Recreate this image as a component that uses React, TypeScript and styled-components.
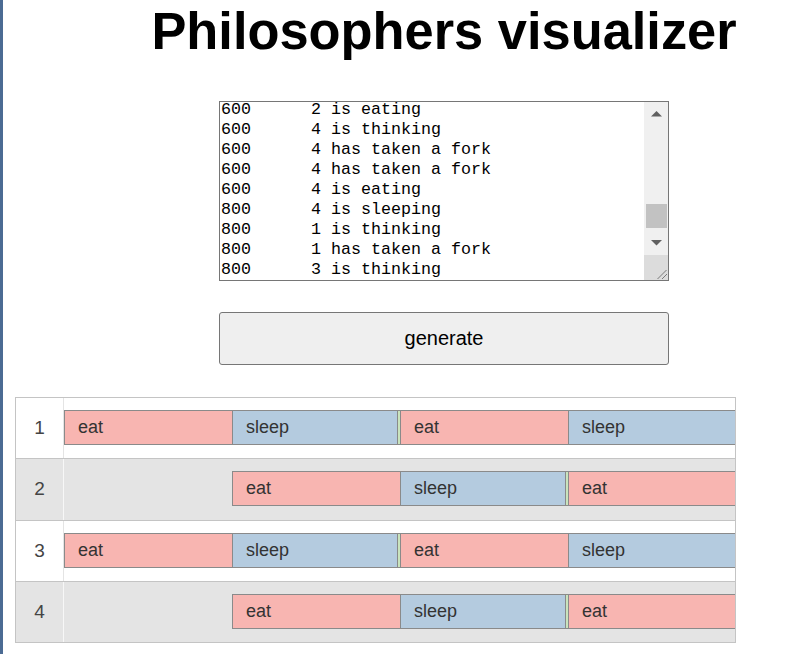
import React, { useLayoutEffect, useRef } from "react";
import styled, { createGlobalStyle } from "styled-components";

const GlobalStyle = createGlobalStyle`
  html, body {
    margin: 0;
    padding: 0;
    background: #ffffff;
  }
  body {
    overflow: hidden;
    font-family: "Liberation Sans", Arial, sans-serif;
  }
`;

const Page = styled.div`
  display: flex;
  min-height: 654px;
`;

const SideBar = styled.div`
  width: 3px;
  flex: none;
  background: #4b6b93;
`;

const Main = styled.main`
  flex: 1;
  min-width: 0;
  display: flex;
  flex-direction: column;
`;

const Header = styled.header`
  display: flex;
  flex-direction: column;
  align-items: center;
  padding-left: 92px;
`;

const Title = styled.h1`
  margin: 1px 0 0;
  height: 60px;
  font-family: "Liberation Sans", Arial, sans-serif;
  font-weight: 700;
  font-size: 52.4px;
  line-height: 60px;
  color: #000;
  white-space: nowrap;
`;

const LogFrame = styled.div`
  margin-top: 40px;
  width: 450px;
  height: 180px;
  box-sizing: border-box;
  border: 1px solid #767676;
  background: #fff;
  display: grid;
  grid-template-columns: 1fr 24px;
`;

const Log = styled.textarea`
  display: block;
  box-sizing: border-box;
  width: 100%;
  height: 100%;
  margin: 0;
  padding: 0 1px;
  border: none;
  font-family: "Liberation Mono", "DejaVu Sans Mono", monospace;
  font-size: 16.67px;
  line-height: 20px;
  color: #000;
  background: #fff;
  white-space: pre;
  overflow: hidden;
  scrollbar-width: none;
  resize: none;
  outline: none;
`;

const Rail = styled.div`
  display: flex;
  flex-direction: column;
  background: #f0f0f0;
`;

const RailButton = styled.div`
  flex: none;
  height: 24px;
  display: flex;
  align-items: center;
  justify-content: center;
  color: #606060;
`;

const RailTrack = styled.div`
  flex: 1;
  display: flex;
  flex-direction: column;
`;

const Thumb = styled.div`
  flex: none;
  height: 24px;
  margin: 0 1px 0 2px;
  background: #c2c2c2;
`;

const Corner = styled.div`
  flex: none;
  height: 25px;
  background: #dcdcdc;
  display: flex;
  align-items: flex-end;
  justify-content: flex-end;
`;

const GenerateButton = styled.button`
  display: block;
  box-sizing: border-box;
  margin-top: 31px;
  width: 450px;
  height: 53px;
  border: 1px solid #767676;
  border-radius: 3px;
  background: #efefef;
  color: #000;
  font-family: "Liberation Sans", Arial, sans-serif;
  font-size: 20px;
  cursor: pointer;
`;

const Table = styled.section`
  margin: 32px 0 0 12px;
  width: 721px;
  box-sizing: border-box;
  border: 1px solid #c4c4c4;
  border-bottom: none;
`;

const Row = styled.div<{ $shade: boolean }>`
  display: grid;
  grid-template-columns: 48px 1fr;
  height: 61.34px;
  box-sizing: border-box;
  border-bottom: 1px solid #c4c4c4;
  background: ${(p) => (p.$shade ? "#e4e4e4" : "#ffffff")};
`;

const Num = styled.div<{ $shade: boolean }>`
  display: flex;
  align-items: center;
  justify-content: center;
  border-right: 1px solid ${(p) => (p.$shade ? "#f7f7f7" : "#e4e4e4")};
  font-size: 19px;
  color: #444;
`;

const Track = styled.div`
  position: relative;
  overflow: hidden;
`;

const palette = {
  eat: "#f8b5b1",
  sleep: "#b4cbdf",
  think: "#c9e4bd",
} as const;

type Kind = keyof typeof palette;

const Bar = styled.div<{ $kind: Kind }>`
  position: absolute;
  top: 12px;
  height: 35px;
  box-sizing: border-box;
  display: flex;
  align-items: center;
  padding-left: ${(p) => (p.$kind === "think" ? "0" : "13px")};
  border: 1px solid #8a8a8a;
  background: ${(p) => palette[p.$kind]};
  color: #333;
  font-size: 18px;
  white-space: nowrap;
  overflow: hidden;
  z-index: ${(p) => (p.$kind === "think" ? 2 : 1)};
`;

type Block = { kind: Kind; start: number; end: number };

const SCALE = 0.84;

const rowA: Block[] = [
  { kind: "eat", start: 0, end: 200 },
  { kind: "sleep", start: 200, end: 400 },
  { kind: "think", start: 400, end: 400 },
  { kind: "eat", start: 400, end: 600 },
  { kind: "sleep", start: 600, end: 800 },
];

const rowB: Block[] = [
  { kind: "eat", start: 200, end: 400 },
  { kind: "sleep", start: 400, end: 600 },
  { kind: "think", start: 600, end: 600 },
  { kind: "eat", start: 600, end: 800 },
];

const rows: Block[][] = [rowA, rowB, rowA, rowB];

const label: Record<Kind, string> = { eat: "eat", sleep: "sleep", think: "" };

const pad = (t: number) => String(t).padEnd(9, " ");

const events: [number, number, string][] = [
  [0, 1, "has taken a fork"],
  [0, 1, "has taken a fork"],
  [0, 1, "is eating"],
  [0, 3, "has taken a fork"],
  [0, 3, "has taken a fork"],
  [0, 3, "is eating"],
  [200, 1, "is sleeping"],
  [200, 3, "is sleeping"],
  [200, 2, "has taken a fork"],
  [200, 2, "has taken a fork"],
  [200, 2, "is eating"],
  [200, 4, "has taken a fork"],
  [200, 4, "has taken a fork"],
  [200, 4, "is eating"],
  [400, 2, "is sleeping"],
  [400, 4, "is sleeping"],
  [400, 1, "is thinking"],
  [400, 1, "has taken a fork"],
  [400, 1, "has taken a fork"],
  [400, 1, "is eating"],
  [400, 3, "is thinking"],
  [400, 3, "has taken a fork"],
  [400, 3, "has taken a fork"],
  [400, 3, "is eating"],
  [600, 1, "is sleeping"],
  [600, 3, "is sleeping"],
  [600, 2, "is thinking"],
  [600, 2, "has taken a fork"],
  [600, 2, "has taken a fork"],
  [600, 2, "is eating"],
  [600, 4, "is thinking"],
  [600, 4, "has taken a fork"],
  [600, 4, "has taken a fork"],
  [600, 4, "is eating"],
  [800, 4, "is sleeping"],
  [800, 1, "is thinking"],
  [800, 1, "has taken a fork"],
  [800, 3, "is thinking"],
  [800, 2, "is sleeping"],
];

const logText = events.map(([t, id, msg]) => `${pad(t)}${id} ${msg}`).join("\n");
const firstVisible = events.findIndex(([t, id, msg]) => t === 600 && id === 2 && msg === "is eating");

const LINE = 20;
const VIEW = 178;
const TRACK = 105;
const THUMB = 24;
const scrollTop = firstVisible * LINE + 2;
const maxScroll = events.length * LINE - VIEW;
const thumbOffset = Math.round((scrollTop / maxScroll) * (TRACK - THUMB));

function blockStyle(b: Block): React.CSSProperties {
  const x = b.start * SCALE;
  if (b.kind === "think") {
    return { left: x - 3, width: 4 };
  }
  return { left: x, width: (b.end - b.start) * SCALE + 1 };
}

function ArrowIcon({ dir }: { dir: "up" | "down" }) {
  const points = dir === "up" ? "0,5.5 5.5,0 11,5.5" : "0,0 5.5,5.5 11,0";
  return (
    <svg width="11" height="6" viewBox="0 0 11 6" aria-hidden="true">
      <polygon points={points} fill="currentColor" />
    </svg>
  );
}

function GripIcon() {
  return (
    <svg width="12" height="12" viewBox="0 0 12 12" aria-hidden="true">
      <line x1="10.5" y1="2" x2="1.5" y2="11" stroke="#7a7a7a" strokeWidth="1" />
      <line x1="11" y1="6" x2="6" y2="11" stroke="#7a7a7a" strokeWidth="1" />
    </svg>
  );
}

export default function App() {
  const logRef = useRef<HTMLTextAreaElement>(null);

  useLayoutEffect(() => {
    if (logRef.current) logRef.current.scrollTop = scrollTop;
  }, []);

  return (
    <>
      <GlobalStyle />
      <Page>
        <SideBar />
        <Main>
          <Header>
            <Title>Philosophers visualizer</Title>
            <LogFrame>
              <Log ref={logRef} defaultValue={logText} spellCheck={false} />
              <Rail>
                <RailButton>
                  <ArrowIcon dir="up" />
                </RailButton>
                <RailTrack>
                  <Thumb style={{ marginTop: thumbOffset }} />
                </RailTrack>
                <RailButton>
                  <ArrowIcon dir="down" />
                </RailButton>
                <Corner>
                  <GripIcon />
                </Corner>
              </Rail>
            </LogFrame>
            <GenerateButton type="button">generate</GenerateButton>
          </Header>
          <Table>
            {rows.map((blocks, i) => {
              const shade = i % 2 === 1;
              return (
                <Row key={i} $shade={shade}>
                  <Num $shade={shade}>{i + 1}</Num>
                  <Track>
                    {blocks.map((b, j) => (
                      <Bar key={j} $kind={b.kind} style={blockStyle(b)}>
                        {label[b.kind]}
                      </Bar>
                    ))}
                  </Track>
                </Row>
              );
            })}
          </Table>
        </Main>
      </Page>
    </>
  );
}
